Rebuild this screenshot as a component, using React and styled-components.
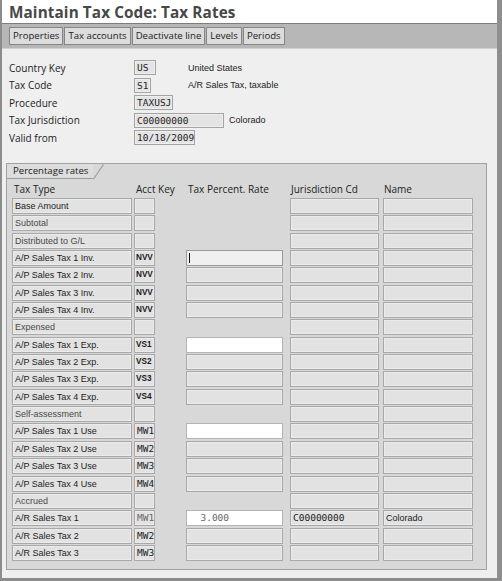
import React from "react";
import styled, { createGlobalStyle, css } from "styled-components";

const GlobalStyle = createGlobalStyle`
  body {
    margin: 0;
    background: #ffffff;
  }
`;

const uiFont = `"Open Sans", "Liberation Sans", sans-serif`;
const cellFont = `"Liberation Sans", Arial, sans-serif`;
const monoFont = `"DejaVu Sans Mono", "Liberation Mono", monospace`;

const Window = styled.div`
  width: 502px;
  height: 581px;
  box-sizing: border-box;
  border-left: 2px solid #8c8c8c;
  border-right: 5px solid #8e8e8e;
  border-bottom: 3px solid #8c8c8c;
  background: #efefef;
  display: flex;
  flex-direction: column;
  overflow: hidden;
`;

const TitleBar = styled.div`
  height: 23px;
  background: #ffffff;
  border-bottom: 1px solid #7c7c7c;
  padding-left: 7px;
  display: flex;
  align-items: center;
`;

const Title = styled.h1`
  margin: 0;
  font-family: ${uiFont};
  font-weight: 700;
  font-size: 15.3px;
  color: #484848;
  letter-spacing: 0.1px;
`;

const Toolbar = styled.div`
  height: 24px;
  background: #b7b7b7;
  border-bottom: 1px solid #d2d2d2;
  display: flex;
  align-items: center;
  gap: 1px;
  padding: 0 7px;
`;

const ToolButton = styled.button`
  height: 18px;
  padding: 0 3px;
  margin: 0;
  background: #dcdcdc;
  border: 1px solid #858585;
  font-family: ${uiFont};
  font-size: 9.6px;
  color: #222;
  line-height: 16px;
`;

const Main = styled.div`
  flex: 1;
  padding: 11px 0 0 4px;
`;

const Form = styled.div`
  display: flex;
  flex-direction: column;
  gap: 2.5px;
  padding-left: 3px;
`;

const FieldRow = styled.div`
  display: flex;
  align-items: center;
  height: 15px;
`;

const FieldLabel = styled.div`
  width: 125px;
  font-family: ${uiFont};
  font-size: 10px;
  color: #222;
`;

const FieldSlot = styled.div`
  min-width: 54px;
  padding-right: 5px;
  box-sizing: border-box;
  display: flex;
`;

const FieldBox = styled.div`
  width: ${(p) => p.$w}px;
  height: 15px;
  box-sizing: border-box;
  background: #e4e4e4;
  border: 1px solid #a4a4a4;
  box-shadow: inset 0 0 0 1px #eeeeee;
  font-family: ${monoFont};
  font-size: 9.5px;
  line-height: 13px;
  padding-left: 2px;
  color: #1e1e1e;
  white-space: nowrap;
`;

const FieldNote = styled.div`
  font-family: ${cellFont};
  font-size: 9px;
  color: #222;
`;

const GroupBox = styled.div`
  margin-top: 18px;
  width: 481px;
  box-sizing: border-box;
  border: 1px solid #a2a2a2;
  background: #d8d8d8;
  padding: 0 0 8px 5px;
`;

const Tab = styled.div`
  position: relative;
  margin-left: -5px;
  width: 86px;
  height: 15px;
  box-sizing: border-box;
  border-bottom: 1px solid #9a9a9a;
  background: #dddddd;
  padding-left: 6px;
  font-family: ${uiFont};
  font-size: 9.6px;
  line-height: 14px;
  color: #222;
  white-space: nowrap;

  &::after {
    content: "";
    position: absolute;
    left: 100%;
    bottom: -1px;
    width: 1px;
    height: 18px;
    background: #9a9a9a;
    transform-origin: bottom left;
    transform: rotate(34deg);
  }
`;

const columns = css`
  display: grid;
  grid-template-columns: 122px 52px 104px 93px 90px;
`;

const HeaderRow = styled.div`
  ${columns};
  height: 19px;
  align-items: center;
`;

const HeaderCell = styled.div`
  padding-left: ${(p) => p.$pad ?? 2}px;
  font-family: ${uiFont};
  font-size: 10px;
  color: #222;
  white-space: nowrap;
`;

const RateGrid = styled.div`
  ${columns};
  grid-auto-rows: 16px;
  row-gap: 1.35px;
`;

const cellTones = {
  gray: css`
    background: #e2e2e2;
    border-color: #a8a8a8;
    box-shadow: inset 0 0 0 1px #ebebeb;
  `,
  white: css`
    background: #ffffff;
    border-color: #b4b4b4;
  `,
  active: css`
    background: #f0f0f0;
    border-color: #9a9a9a;
  `,
};

const Cell = styled.div`
  position: relative;
  width: ${(p) => p.$w}px;
  height: 16px;
  box-sizing: border-box;
  border: 1px solid;
  ${(p) => cellTones[p.$tone || "gray"]};
  padding-left: ${(p) => (p.$bold ? 1 : 2)}px;
  font-family: ${(p) => (p.$mono ? monoFont : cellFont)};
  font-size: ${(p) => (p.$mono ? "9.5px" : p.$bold ? "8.2px" : "9px")};
  font-weight: ${(p) => (p.$bold ? 700 : 400)};
  line-height: 14px;
  color: ${(p) => p.$ink || "#1c1c1c"};
  white-space: pre;
  overflow: hidden;
`;

const Caret = styled.span`
  position: absolute;
  left: 2px;
  top: 2px;
  width: 1px;
  height: 10px;
  background: #111;
`;

const rows = [
  { type: "Base Amount" },
  { type: "Subtotal", muted: true },
  { type: "Distributed to G/L", muted: true },
  { type: "A/P Sales Tax 1 Inv.", acct: "NVV", rate: "active", caret: true },
  { type: "A/P Sales Tax 2 Inv.", acct: "NVV", rate: "gray" },
  { type: "A/P Sales Tax 3 Inv.", acct: "NVV", rate: "gray" },
  { type: "A/P Sales Tax 4 Inv.", acct: "NVV", rate: "gray" },
  { type: "Expensed", muted: true },
  { type: "A/P Sales Tax 1 Exp.", acct: "VS1", rate: "white" },
  { type: "A/P Sales Tax 2 Exp.", acct: "VS2", rate: "gray" },
  { type: "A/P Sales Tax 3 Exp.", acct: "VS3", rate: "gray" },
  { type: "A/P Sales Tax 4 Exp.", acct: "VS4", rate: "gray" },
  { type: "Self-assessment", muted: true },
  { type: "A/P Sales Tax 1 Use", acct: "MW1", mono: true, rate: "white" },
  { type: "A/P Sales Tax 2 Use", acct: "MW2", mono: true, rate: "gray" },
  { type: "A/P Sales Tax 3 Use", acct: "MW3", mono: true, rate: "gray" },
  { type: "A/P Sales Tax 4 Use", acct: "MW4", mono: true, rate: "gray" },
  { type: "Accrued", muted: true },
  {
    type: "A/R Sales Tax 1",
    acct: "MW1",
    mono: true,
    acctInk: "#6a6a6a",
    rate: "white",
    value: "  3.000",
    juris: "C00000000",
    name: "Colorado",
  },
  { type: "A/R Sales Tax 2", acct: "MW2", mono: true, rate: "gray" },
  { type: "A/R Sales Tax 3", acct: "MW3", mono: true, rate: "gray" },
];

const fields = [
  { label: "Country Key", value: "US", w: 22, note: "United States" },
  { label: "Tax Code", value: "S1", w: 17, note: "A/R Sales Tax, taxable" },
  { label: "Procedure", value: "TAXUSJ", w: 39 },
  { label: "Tax Jurisdiction", value: "C00000000", w: 90, note: "Colorado" },
  { label: "Valid from", value: "10/18/2009", w: 61 },
];

const tools = ["Properties", "Tax accounts", "Deactivate line", "Levels", "Periods"];

export default function App() {
  return (
    <>
      <GlobalStyle />
      <Window>
        <TitleBar>
          <Title>Maintain Tax Code: Tax Rates</Title>
        </TitleBar>
        <Toolbar>
          {tools.map((t) => (
            <ToolButton key={t}>{t}</ToolButton>
          ))}
        </Toolbar>
        <Main>
          <Form>
            {fields.map((f) => (
              <FieldRow key={f.label}>
                <FieldLabel>{f.label}</FieldLabel>
                <FieldSlot>
                  <FieldBox $w={f.w}>{f.value}</FieldBox>
                </FieldSlot>
                {f.note && <FieldNote>{f.note}</FieldNote>}
              </FieldRow>
            ))}
          </Form>

          <GroupBox>
            <Tab>Percentage rates</Tab>
            <HeaderRow>
              <HeaderCell>Tax Type</HeaderCell>
              <HeaderCell>Acct Key</HeaderCell>
              <HeaderCell>Tax Percent. Rate</HeaderCell>
              <HeaderCell $pad={1}>Jurisdiction Cd</HeaderCell>
              <HeaderCell $pad={1}>Name</HeaderCell>
            </HeaderRow>
            <RateGrid>
              {rows.map((r) => (
                <React.Fragment key={r.type}>
                  <Cell $w={120} $ink={r.muted ? "#4a4a4a" : undefined}>
                    {r.type}
                  </Cell>
                  <Cell
                    $w={21}
                    $mono={r.mono}
                    $bold={r.acct && !r.mono}
                    $ink={r.acctInk}
                  >
                    {r.acct || ""}
                  </Cell>
                  {r.rate ? (
                    <Cell $w={97} $tone={r.rate} $mono $ink="#666">
                      {r.caret && <Caret />}
                      {r.value || ""}
                    </Cell>
                  ) : (
                    <div />
                  )}
                  <Cell $w={89} $mono>
                    {r.juris || ""}
                  </Cell>
                  <Cell $w={90}>{r.name || ""}</Cell>
                </React.Fragment>
              ))}
            </RateGrid>
          </GroupBox>
        </Main>
      </Window>
    </>
  );
}
